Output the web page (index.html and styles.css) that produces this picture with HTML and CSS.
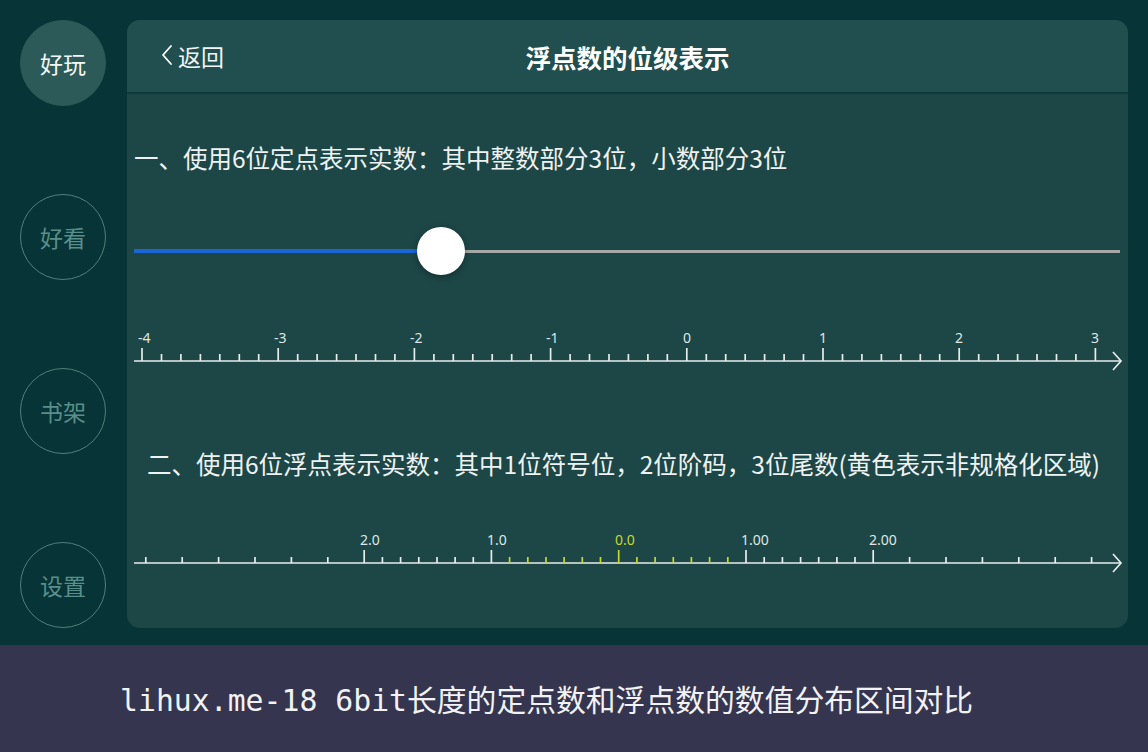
FILE: index.html
```html
<!DOCTYPE html>
<html lang="zh">
<head>
<meta charset="utf-8">
<title>浮点数的位级表示</title>
<link rel="stylesheet" href="styles.css">
</head>
<body>
<div class="app">
  <nav class="sidebar">
    <div class="tab tab-active">好玩</div>
    <div class="tab">好看</div>
    <div class="tab">书架</div>
    <div class="tab">设置</div>
  </nav>
  <main class="card">
    <header class="card-header">
      <div class="back">
        <svg class="back-icon" width="14" height="22" viewBox="0 0 14 22"><polyline points="11,2 3,11 11,20" fill="none" stroke="#ffffff" stroke-width="1.8" stroke-linecap="round" stroke-linejoin="round"/></svg>
        <span>返回</span>
      </div>
      <h1 class="title">浮点数的位级表示</h1>
      <div class="header-spacer"></div>
    </header>
    <section class="card-body">
      <p class="line line-one">一、使用6位定点表示实数：其中整数部分3位，小数部分3位</p>
      <div class="slider">
        <div class="slider-fill"></div>
        <div class="slider-thumb"></div>
        <div class="slider-rest"></div>
      </div>
      <svg class="axis" width="1001" height="60" viewBox="0 0 1001 60">
        <g class="axis-lines">
          <line x1="7" y1="41" x2="993" y2="41"/>
          <polyline points="986,32 994,41 986,50" fill="none"/>
          <path d="M15 28V41M151.2 28V41M287.4 28V41M423.6 28V41M559.8 28V41M696 28V41M832.2 28V41M968.4 28V41"/>
          <path d="M34.5 34V41M53.9 34V41M73.4 34V41M92.8 34V41M112.3 34V41M131.7 34V41M170.7 34V41M190.1 34V41M209.6 34V41M229 34V41M248.5 34V41M267.9 34V41M306.9 34V41M326.3 34V41M345.8 34V41M365.2 34V41M384.7 34V41M404.1 34V41M443.1 34V41M462.5 34V41M482 34V41M501.4 34V41M520.9 34V41M540.3 34V41M579.3 34V41M598.7 34V41M618.2 34V41M637.6 34V41M657.1 34V41M676.5 34V41M715.5 34V41M734.9 34V41M754.4 34V41M773.8 34V41M793.3 34V41M812.7 34V41M851.7 34V41M871.1 34V41M890.6 34V41M910 34V41M929.5 34V41M948.9 34V41"/>
        </g>
        <g class="axis-labels">
          <text x="11" y="23">-4</text>
          <text x="147" y="23">-3</text>
          <text x="283" y="23">-2</text>
          <text x="419" y="23">-1</text>
          <text x="556" y="23">0</text>
          <text x="692" y="23">1</text>
          <text x="828" y="23">2</text>
          <text x="964" y="23">3</text>
        </g>
      </svg>
      <p class="line line-two">二、使用6位浮点表示实数：其中1位符号位，2位阶码，3位尾数(黄色表示非规格化区域)</p>
      <svg class="axis" width="1001" height="60" viewBox="0 0 1001 60">
        <g class="axis-lines">
          <line x1="7" y1="42" x2="993" y2="42"/>
          <polyline points="986,33 994,42 986,51" fill="none"/>
          <path d="M237.2 29V42M364.4 29V42M619 29V42M746.2 29V42"/>
          <path d="M18.8 36V42M55.2 36V42M91.6 36V42M128 36V42M164.4 36V42M200.8 36V42M255.4 36V42M273.6 36V42M291.8 36V42M310 36V42M328.1 36V42M346.3 36V42M637.2 36V42M655.4 36V42M673.6 36V42M691.7 36V42M709.9 36V42M728 36V42M782.6 36V42M819 36V42M855.4 36V42M891.8 36V42M928.2 36V42M964.6 36V42"/>
        </g>
        <g class="axis-denorm">
          <path d="M491.7 29V42"/>
          <path d="M382.6 36V42M400.8 36V42M419 36V42M437.1 36V42M455.3 36V42M473.5 36V42M509.9 36V42M528.1 36V42M546.3 36V42M564.4 36V42M582.6 36V42M600.8 36V42"/>
        </g>
        <g class="axis-labels">
          <text x="233" y="24">2.0</text>
          <text x="360" y="24">1.0</text>
          <text class="label-denorm" x="488" y="24">0.0</text>
          <text x="614" y="24">1.00</text>
          <text x="742" y="24">2.00</text>
        </g>
      </svg>
    </section>
  </main>
</div>
<footer class="caption">lihux.me-18 6bit长度的定点数和浮点数的数值分布区间对比</footer>
</body>
</html>
```
FILE: styles.css
```css
* { box-sizing: border-box; }
html, body { margin: 0; padding: 0; }
body {
  width: 1148px;
  height: 752px;
  overflow: hidden;
  background: #073436;
  font-family: "Noto Sans CJK SC", "Noto Sans", sans-serif;
  color: #ffffff;
}
.app {
  height: 645px;
  display: flex;
  gap: 21px;
  padding: 20px 20px 17px 20px;
}
.sidebar {
  width: 86px;
  display: flex;
  flex-direction: column;
  gap: 88px;
}
.tab {
  width: 86px;
  height: 86px;
  border-radius: 50%;
  border: 1.5px solid #4e807d;
  color: #5a8e8a;
  font-size: 23px;
  display: flex;
  align-items: center;
  justify-content: center;
}
.tab-active {
  background: #2c5a59;
  border-color: #2c5a59;
  color: #f4f7f7;
}
.card {
  flex: 1;
  background: #1d4646;
  border-radius: 13px;
  overflow: hidden;
  display: flex;
  flex-direction: column;
}
.card-header {
  height: 74px;
  background: #214f4f;
  border-bottom: 2px solid #0f3a3b;
  display: flex;
  align-items: center;
  padding: 0 0 0 33px;
}
.back {
  width: 160px;
  display: flex;
  align-items: center;
  gap: 4px;
  font-size: 23px;
  color: #f2f5f5;
}
.back-icon { margin-top: -2px; }
.title {
  flex: 1;
  margin: 0;
  text-align: center;
  font-size: 25.5px;
  font-weight: 700;
  color: #ffffff;
  padding-right: 33px;
}
.header-spacer { width: 160px; }
.card-body {
  flex: 1;
  display: flex;
  flex-direction: column;
}
.line {
  margin: 0;
  font-size: 24.5px;
  line-height: 40px;
  color: #eef2f2;
  white-space: nowrap;
}
.line-one {
  margin-top: 44px;
  padding-left: 7px;
}
.line-two {
  margin-top: 64px;
  margin-bottom: 37px;
  text-align: center;
  padding-right: 8px;
}
.slider {
  height: 138px;
  margin: 4px 8px 0 7px;
  display: flex;
  align-items: center;
}
.slider-fill {
  width: 290px;
  height: 4px;
  background: #1a66d6;
  margin-right: -7px;
}
.slider-thumb {
  width: 48px;
  height: 48px;
  border-radius: 50%;
  background: #ffffff;
  box-shadow: 0 2px 6px rgba(0, 0, 0, 0.35);
  position: relative;
  z-index: 1;
  flex-shrink: 0;
}
.slider-rest {
  flex: 1;
  height: 3px;
  background: #a6a8a8;
  margin-left: -2px;
}
.axis { display: block; }
.axis-lines line,
.axis-lines polyline,
.axis-lines path {
  stroke: #e7ecec;
  stroke-width: 1.7;
  fill: none;
}
.axis-denorm path {
  stroke: #c8d82e;
  stroke-width: 1.7;
  fill: none;
}
.axis-labels text {
  font-family: "Noto Sans", "Liberation Sans", sans-serif;
  font-size: 14px;
  fill: #dfe6e5;
}
.axis-labels .label-denorm { fill: #c8d82e; }
.caption {
  height: 107px;
  background: #35354f;
  display: flex;
  align-items: center;
  padding-left: 120px;
  padding-bottom: 2px;
  font-family: "DejaVu Sans Mono", "Noto Sans CJK SC", monospace;
  font-size: 29.8px;
  color: #f2f2f4;
  white-space: nowrap;
}
```
